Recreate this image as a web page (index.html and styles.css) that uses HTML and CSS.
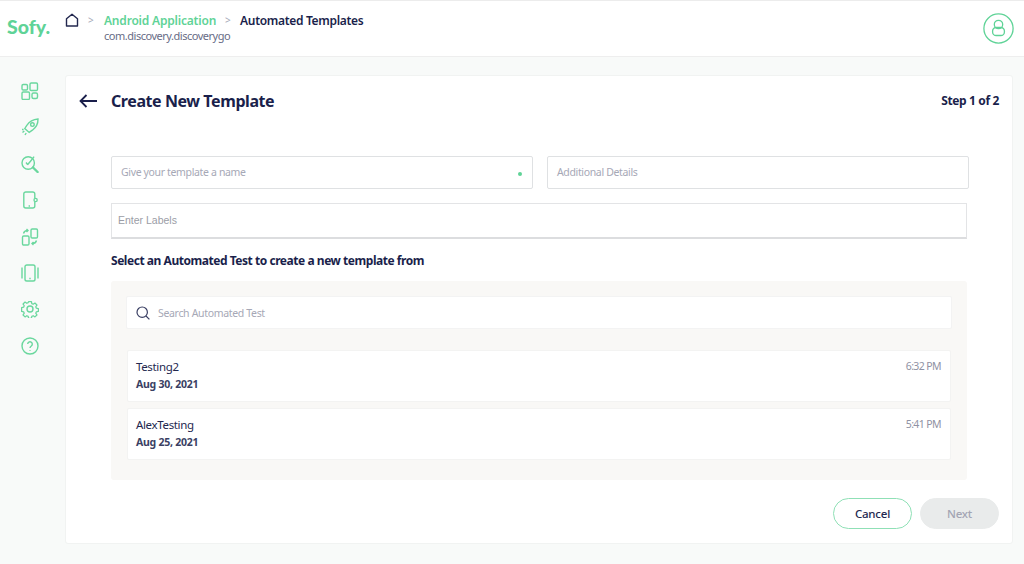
FILE: index.html
```html
<!DOCTYPE html>
<html lang="en">
<head>
<meta charset="utf-8">
<title>Create New Template</title>
<link rel="stylesheet" href="styles.css">
</head>
<body>
<header class="topbar">
  <div class="logo">Sofy.</div>
  <svg class="home" viewBox="0 0 14 14" width="14" height="14"><path d="M1.5 13V5.8L7 1.2l5.5 4.6V13z" fill="none" stroke="#23284f" stroke-width="1.4" stroke-linejoin="round"/></svg>
  <div class="crumbs">
    <div class="crumb-line">
      <span class="sep">&gt;</span>
      <div class="crumb-app">
        <span class="crumb-green">Android Application</span>
      </div>
      <span class="sep sep2">&gt;</span>
      <span class="crumb-dark">Automated Templates</span>
    </div>
    <div class="pkg">com.discovery.discoverygo</div>
  </div>
  <div class="avatar">
    <svg viewBox="0 0 32 32" width="32" height="32" fill="none" stroke="#5fd397" stroke-width="1.3"><circle cx="15.5" cy="15.5" r="14.6"/><circle cx="15.5" cy="11.5" r="4.2"/><rect x="9.6" y="14.5" width="11.8" height="8" rx="3.6"/></svg>
  </div>
</header>
<div class="layout">
  <nav class="side">
    <svg viewBox="0 0 18 18" width="18" height="18" class="ico"><rect x="1" y="2.5" width="5.5" height="5.5" rx="1.2"/><rect x="9" y="1" width="7.5" height="7.5" rx="1.2"/><rect x="1" y="10" width="7.5" height="7.5" rx="1.2"/><rect x="11" y="11" width="5.5" height="5.5" rx="1.5"/></svg>
    <svg viewBox="0 0 18 18" width="18" height="18" class="ico"><path d="M3.8 10.5l2-3.2C8.3 3.6 12.3 1.4 17 1c.1 4.6-2 8.6-5.6 11.2l-3.2 2.2z"/><circle cx="11.4" cy="6.6" r="1.8"/><path d="M1 11.5h1.6M1.5 14.5l1.8-1.6M4 17l1.2-2"/></svg>
    <svg viewBox="0 0 18 18" width="18" height="18" class="ico"><circle cx="7.2" cy="8" r="6.2"/><path d="M12 12.5l4.6 4.5" stroke-width="2.4" stroke-linecap="round"/><path d="M6.5 9.8l3-3.6M9.5 6.2l3.6-4.6M5 7.5l1.8 2.2"/></svg>
    <svg viewBox="0 0 18 18" width="18" height="18" class="ico"><path d="M13.8 7.2V3a2 2 0 0 0-2-2h-7a2 2 0 0 0-2 2v12a2 2 0 0 0 2 2h7a2 2 0 0 0 2-2v-4"/><circle cx="14.6" cy="9" r="1.6"/><path d="M7.6 15h1.4"/></svg>
    <svg viewBox="0 0 18 18" width="18" height="18" class="ico"><rect x="10" y="1" width="6.5" height="9" rx="1.2"/><rect x="1.5" y="8" width="6.5" height="9" rx="1.2"/><path d="M2.5 5.5C3 3.5 4.5 2.5 6.5 2.5M5.5 1l1.5 1.5L5.5 4M15.5 12.5c-.5 2-2 3-4 3M12.5 14l-1.5 1.5 1.5 1.5"/></svg>
    <svg viewBox="0 0 18 18" width="18" height="18" class="ico"><rect x="4" y="1" width="10" height="16" rx="1.8"/><path d="M1 3.5v11M17 3.5v11M8.3 14.5h1.4"/></svg>
    <svg viewBox="0 0 18 18" width="18" height="18" class="ico"><circle cx="9" cy="9" r="3"/><path d="M7.4 .8h3.2l.4 2.2 1.6.7 1.9-1.3 2.2 2.2-1.3 1.9.7 1.6 2.2.4v3.2l-2.2.4-.7 1.6 1.3 1.9-2.2 2.2-1.9-1.3-1.6.7-.4 2.2H7.4l-.4-2.2-1.6-.7-1.9 1.3-2.2-2.2 1.3-1.9-.7-1.6-2.2-.4V7.4l2.2-.4.7-1.6-1.3-1.9 2.2-2.2 1.9 1.3 1.6-.7z" transform="translate(.9 .9) scale(.9)" stroke-linejoin="round"/></svg>
    <svg viewBox="0 0 18 18" width="18" height="18" class="ico"><circle cx="9" cy="9" r="8"/><path d="M6.7 7a2.3 2.3 0 1 1 3.6 2c-.9.6-1.3 1-1.3 2"/><path d="M9 13v.8"/></svg>
  </nav>
  <main class="card">
    <div class="card-head">
      <svg class="back" viewBox="0 0 18 14" width="18" height="14" fill="none" stroke="#1a1f4b" stroke-width="1.8"><path d="M18 7H1.5M7.5 1L1.5 7l6 6"/></svg>
      <h1 class="title">Create New Template</h1>
      <span class="step">Step 1 of 2</span>
    </div>
    <div class="fields">
      <div class="field field-name">Give your template a name<span class="req"></span></div>
      <div class="field field-details">Additional Details</div>
    </div>
    <div class="labels">Enter Labels</div>
    <h2 class="subhead">Select an Automated Test to create a new template from</h2>
    <section class="panel">
      <div class="search">
        <svg viewBox="0 0 14 14" width="14" height="14" fill="none" stroke="#3a3f63" stroke-width="1.2"><circle cx="6.2" cy="6.2" r="5.2"/><path d="M10 10l3.4 3.4"/></svg>
        <span>Search Automated Test</span>
      </div>
      <div class="rows">
        <div class="row">
          <div><div class="row-name">Testing2</div><div class="row-date">Aug 30, 2021</div></div>
          <div class="row-time">6:32 PM</div>
        </div>
        <div class="row">
          <div><div class="row-name">AlexTesting</div><div class="row-date">Aug 25, 2021</div></div>
          <div class="row-time">5:41 PM</div>
        </div>
      </div>
    </section>
    <div class="actions">
      <button class="btn cancel">Cancel</button>
      <button class="btn next">Next</button>
    </div>
  </main>
</div>
</body>
</html>
```
FILE: styles.css
```css
* { box-sizing: border-box; }
html, body { margin: 0; height: 100%; }
body {
  width: 1024px;
  height: 564px;
  overflow: hidden;
  background: #f8faf9;
  font-family: "Noto Sans", "Open Sans", sans-serif;
  color: #1a1f4b;
}
.topbar {
  height: 57px;
  background: #fff;
  border-top: 1px solid #ececec;
  border-bottom: 1px solid #eeeeee;
  display: flex;
  align-items: flex-start;
}
.logo {
  font-family: "Lato", sans-serif;
  font-weight: 900;
  font-size: 19.5px;
  line-height: 24px;
  color: #5fd397;
  margin: 14px 0 0 7px;
  width: 58px;
}
.home { margin-top: 12px; flex: none; }
.crumbs { margin-left: 9px; }
.crumb-line { display: flex; align-items: center; height: 20px; margin-top: 9px; font-size: 12px; font-weight: 600; }
.crumb-app { margin-left: 10px; letter-spacing: -.2px; }
.crumb-green { color: #5fd397; }
.crumb-dark { color: #1a1f4b; letter-spacing: -.32px; }
.sep { color: #a6a9b8; font-size: 10px; font-weight: 400; width: 6px; }
.sep2 { margin: 0 9px; }
.pkg { margin-left: 16px; font-size: 11px; line-height: 14px; color: #686c86; margin-top: -1px; letter-spacing: -.48px; }
.avatar { margin: 12px 9px 0 auto; width: 32px; height: 32px; }
.avatar svg { display: block; }
.layout { display: flex; height: 507px; }
.side {
  width: 65px;
  flex: none;
  padding-top: 25px;
  display: flex;
  flex-direction: column;
  align-items: center;
  gap: 18.4px;
  padding-right: 5px;
}
.ico { fill: none; stroke: #6ad79e; stroke-width: 1.4; display: block; flex: none; }
.card {
  width: 948px;
  height: 469px;
  margin-top: 18px;
  background: #fff;
  border: 1px solid #f1f3f2;
  border-radius: 3px;
  padding: 0 13px 0 45px;
}
.card-head { display: flex; align-items: center; height: 50px; margin-left: -32px; }
.back { flex: none; margin-right: 14px; margin-top: 0; }
.title { margin: 0; font-size: 16px; font-weight: 700; color: #1a1f4b; letter-spacing: -.42px; }
.step { margin-left: auto; margin-bottom: 2px; font-size: 12px; font-weight: 700; letter-spacing: -.36px; }
.fields { display: flex; gap: 14px; margin-top: 30px; width: 858px; }
.field {
  height: 33px;
  flex: 1;
  border: 1px solid #dfe1e3;
  border-radius: 2px;
  font-size: 10.5px;
  line-height: 31px;
  padding-left: 9px;
  color: #a6a8b6;
  position: relative;
  letter-spacing: -.35px;
}
.req { position: absolute; right: 10px; top: 15px; width: 4px; height: 4px; border-radius: 50%; background: #5fd397; }
.labels {
  width: 856px;
  height: 36px;
  margin-top: 14px;
  border: 1px solid #e3e4e6;
  border-bottom: 2px solid #dcdddf;
  font-family: "Liberation Sans", sans-serif;
  font-size: 10.5px;
  line-height: 33px;
  padding-left: 6px;
  color: #9b9da6;
}
.subhead { margin: 13px 0 0; font-size: 12px; line-height: 17px; font-weight: 700; color: #1a1f4b; letter-spacing: -.46px; }
.panel {
  width: 856px;
  height: 199px;
  margin-top: 12px;
  background: #f9f8f6;
  border-radius: 3px;
  padding: 15px;
}
.search {
  height: 33px;
  background: #fff;
  border: 1px solid #f3f3f3;
  border-radius: 2px;
  display: flex;
  align-items: center;
  gap: 8px;
  padding-left: 9px;
  font-size: 10.5px;
  color: #a6a8b6;
  letter-spacing: -.33px;
}
.rows { margin: 21px 1px 0; display: flex; flex-direction: column; gap: 6px; }
.row {
  height: 52px;
  background: #fff;
  border: 1px solid #f3f3f2;
  border-radius: 2px;
  padding: 7px 9px 0 8px;
  display: flex;
  justify-content: space-between;
}
.row-name { font-size: 11.5px; line-height: 17px; color: #23284f; letter-spacing: -.35px; }
.row-date { font-size: 10.5px; line-height: 15px; margin-top: 2px; font-weight: 700; color: #3a3f63; letter-spacing: -.25px; }
.row-time { font-size: 10.5px; line-height: 17px; color: #8f92a3; letter-spacing: -.6px; }
.actions { display: flex; justify-content: flex-end; gap: 8px; margin-top: 18px; }
.btn {
  width: 79px;
  height: 31px;
  border-radius: 16px;
  font-family: inherit;
  font-size: 11.5px;
  font-weight: 500;
  padding: 0;
  letter-spacing: -.2px;
}
.cancel { background: #fff; border: 1px solid #8fe0b6; color: #23284f; }
.next { background: #e9ebeb; border: 1px solid #e9ebeb; color: #a3a5b3; }
```
